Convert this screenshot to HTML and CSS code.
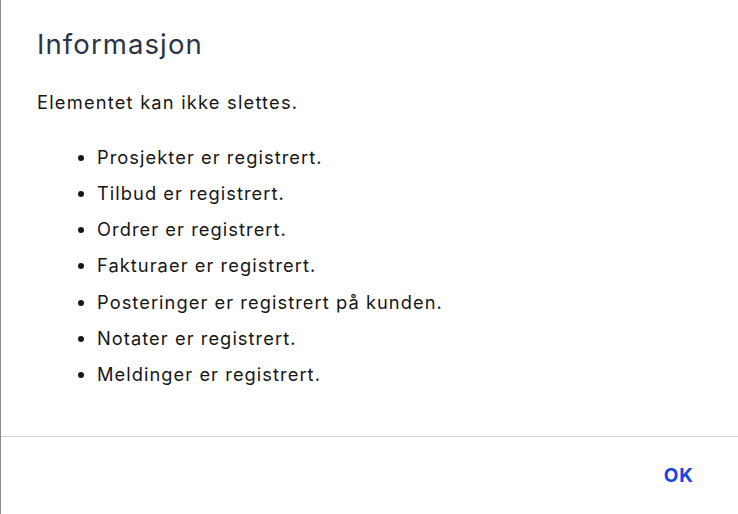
FILE: index.html
```html
<!DOCTYPE html>
<html lang="no">
<head>
<meta charset="utf-8">
<link rel="stylesheet" href="styles.css">
</head>
<body>
<div class="dialog">
  <div class="content">
    <h1 class="title">Informasjon</h1>
    <p class="lead">Elementet kan ikke slettes.</p>
    <ul class="reasons">
      <li>Prosjekter er registrert.</li>
      <li>Tilbud er registrert.</li>
      <li>Ordrer er registrert.</li>
      <li>Fakturaer er registrert.</li>
      <li>Posteringer er registrert på kunden.</li>
      <li>Notater er registrert.</li>
      <li>Meldinger er registrert.</li>
    </ul>
  </div>
  <div class="footer">
    <button class="ok">OK</button>
  </div>
</div>
</body>
</html>
```
FILE: styles.css
```css
html, body {
  margin: 0;
  padding: 0;
  background: #fff;
}
body {
  font-family: Inter, "Noto Sans", sans-serif;
  width: 738px;
  height: 514px;
  overflow: hidden;
}
.dialog {
  box-sizing: border-box;
  width: 738px;
  height: 514px;
  border-left: 1px solid #8a8a8a;
  display: flex;
  flex-direction: column;
}
.content {
  flex: 1;
  padding: 28px 36px 0 36px;
}
.title {
  margin: 0;
  font-size: 27.5px;
  line-height: 32px;
  font-weight: 400;
  letter-spacing: 1.1px;
  color: #2b3445;
}
.lead {
  margin: 30px 0 0 0;
  font-size: 18.3px;
  line-height: 24px;
  letter-spacing: 1.2px;
  color: #161616;
}
.reasons {
  margin: 31px 0 0 0;
  padding-left: 60px;
  font-size: 18.3px;
  line-height: 24px;
  letter-spacing: 1.05px;
  color: #161616;
}
.reasons li {
  margin-bottom: 12.17px;
}
.footer {
  height: 77px;
  border-top: 1px solid #cfcfcf;
  display: flex;
  align-items: center;
  justify-content: flex-end;
  padding-right: 44px;
}
.ok {
  border: none;
  background: none;
  padding: 0;
  font-family: Inter, "Noto Sans", sans-serif;
  font-size: 19px;
  font-weight: 700;
  letter-spacing: 1px;
  color: #1a44e8;
  line-height: 24px;
}
```
